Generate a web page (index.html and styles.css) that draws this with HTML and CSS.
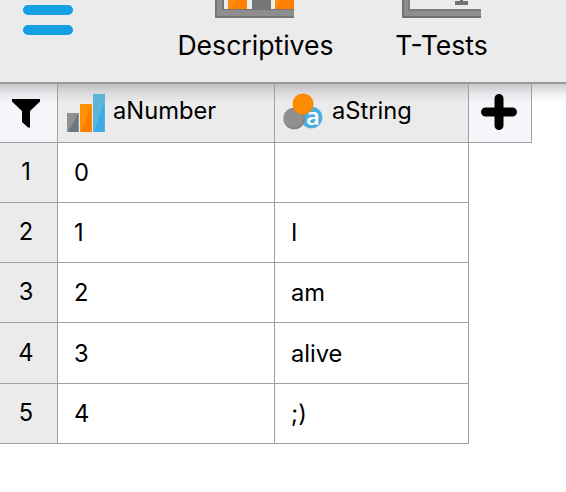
FILE: index.html
```
<!DOCTYPE html>
<html lang="en">
<head>
<meta charset="utf-8">
<title>Data</title>
<link rel="stylesheet" href="styles.css">
</head>
<body>
<header class="ribbon">
  <div class="menu"><span></span><span></span></div>
  <div class="module descriptives">
    <svg width="79" height="18" viewBox="0 0 79 18">
      <path d="M0 0H79V18H0Z" fill="#8e8e8e"/>
      <path d="M0 0H2V16H79V18H0Z" fill="#777"/>
      <path d="M7 0H79V10H7Z" fill="#757575"/>
      <path d="M9 0H79V9H9Z" fill="#ededed"/>
      <path d="M13 0H32V9H13ZM60 0H79V9H60Z" fill="#ff8000"/>
      <path d="M13 0H20L15 9H13ZM60 0H66L61 9H60Z" fill="#ff8b0c"/>
      <path d="M37 0H56V9H37Z" fill="#6c7780"/>
      <path d="M39 0H54V9H39Z" fill="#767676"/>
    </svg>
    <div class="label">Descriptives</div>
  </div>
  <div class="module ttests">
    <svg width="79" height="18" viewBox="0 0 79 18">
      <path d="M0 0H8V9H79V18H0Z" fill="#8e8e8e"/>
      <path d="M0 0H2V16H79V18H0Z" fill="#707070"/>
      <path d="M6 0H8V9H79V11H6Z" fill="#7d7d7d"/>
      <path d="M53 1H58V0H61V1H66V5H53Z" fill="#6d7370"/>
    </svg>
    <div class="label">T-Tests</div>
  </div>
</header>
<main class="data">
  <div class="head filter">
    <svg width="30" height="30" viewBox="0 0 30 30"><path d="M1 1H29V3.500L19 13V29.500H17L11 24V13L1 3.500Z"/></svg>
  </div>
  <div class="head column">
    <svg width="38" height="38" viewBox="0 0 38 38">
      <path d="M0 19H12V38H0Z" fill="#909090"/><path d="M11 20V38H1Z" fill="#6b7680"/>
      <path d="M13 10H25V38H13Z" fill="#ff9000"/><path d="M24 13V38H14Z" fill="#ff7b00"/>
      <path d="M26 0H38V38H26Z" fill="#5bb5d7"/><path d="M37 8V38H27Z" fill="#3daae8"/>
    </svg>
    <span>aNumber</span>
  </div>
  <div class="head column string">
    <svg width="40" height="38" viewBox="0 0 40 38">
      <circle cx="28.500" cy="23.500" r="10.800" fill="#4daee0"/>
      <circle cx="11.200" cy="24.500" r="10.800" fill="#808386"/>
      <circle cx="10.700" cy="24" r="9.800" fill="#909090"/>
      <circle cx="20" cy="10" r="10.500" fill="#fa8400"/>
      <circle cx="19.700" cy="9.700" r="9.500" fill="#ff8c00"/>
      <text class="glyph" x="23" y="31">a</text>
    </svg>
    <span>aString</span>
  </div>
  <div class="head add">
    <svg width="38" height="38" viewBox="0 0 38 38"><path d="M19 5.500V32.500M5.500 19H32.500" stroke="#000" stroke-width="9" stroke-linecap="round"/></svg>
  </div>
  <div class="head rest"></div>
  <div class="row-number">1</div><div class="cell">0</div><div class="cell"></div>
  <div class="row-number">2</div><div class="cell">1</div><div class="cell">I</div>
  <div class="row-number">3</div><div class="cell">2</div><div class="cell">am</div>
  <div class="row-number">4</div><div class="cell">3</div><div class="cell">alive</div>
  <div class="row-number">5</div><div class="cell">4</div><div class="cell">;)</div>
</main>
</body>
</html>
```
FILE: styles.css
```
* { box-sizing: border-box; }

body {
  margin: 0;
  height: 492px;
  overflow: hidden;
  background: #fff;
  color: #000;
  font-family: Inter, "Liberation Sans", sans-serif;
  font-size: 23.7px;
}

svg { display: block; flex: none; overflow: visible; }

.ribbon {
  display: flex;
  height: 84px;
  background: #ebebeb;
  border-bottom: 2px solid #999;
}

.menu {
  display: flex;
  flex-direction: column;
  gap: 10px;
  width: 50px;
  margin: 5px 82px 0 23px;
}

.menu span {
  height: 10px;
  border-radius: 5px;
  background: #14a1e3;
}

.module {
  display: flex;
  flex-direction: column;
  align-items: center;
  width: 200px;
}

.descriptives { padding-right: 1px; }
.ttests { width: 173px; }

.label {
  margin-top: 11px;
  font-size: 26.6px;
  line-height: 32px;
  white-space: nowrap;
}

.descriptives .label { padding-left: 2px; }

.data {
  display: grid;
  grid-template-columns: 58px 217px 194px 63px 1fr;
  grid-template-rows: 59px 60px 60px 60px 61px 60px;
}

.head {
  display: flex;
  align-items: center;
  border-right: 1px solid #a0a0a0;
  border-bottom: 1px solid #a0a0a0;
  background: linear-gradient(rgba(0, 0, 0, .19), rgba(0, 0, 0, .06) 10px, transparent 19px) #ebebeb;
}

.filter, .add { background-color: #f4f6f9; }
.filter { padding-left: 11px; }
.column { gap: 8px; padding-left: 9px; }
.column span { padding-bottom: 6px; }
.string { gap: 9px; padding-left: 8px; }
.add { padding: 0 0 3px 11px; }
.rest { border: 0; background-color: #fff; }

.glyph {
  font: 600 24px "Open Sans", sans-serif;
  fill: #fff;
}

.row-number, .cell {
  display: flex;
  align-items: center;
  border-right: 1px solid #a0a0a0;
  border-bottom: 1px solid #a0a0a0;
}

.row-number {
  grid-column: 1;
  justify-content: center;
  padding: 0 5px 2px 0;
  background: #ebebeb;
}

.cell { padding-left: 16px; }
```
